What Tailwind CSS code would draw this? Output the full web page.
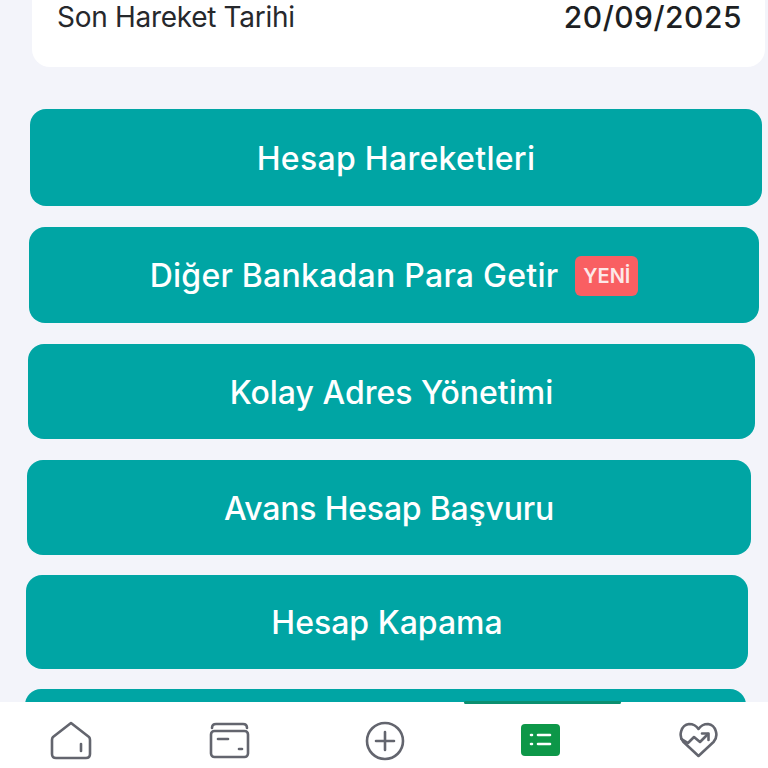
<!DOCTYPE html>
<html lang="tr">
<head>
<meta charset="UTF-8">
<script src="https://cdn.jsdelivr.net/npm/@tailwindcss/browser@4"></script>
<title>Hesap</title>
</head>
<body class="bg-[#f3f4fa] font-['Inter',sans-serif]">
<div class="relative h-[768px] w-[768px] overflow-hidden">

  <!-- Card -->
  <div class="ml-[32px] flex h-[67px] w-[733px] items-start justify-between rounded-b-[18px] bg-white pl-[25px] pr-[23px]">
    <span class="text-[28px] leading-[35px] tracking-[-0.3px] text-[#26282c]">Son Hareket Tarihi</span>
    <span class="text-[30px] leading-[35px] tracking-[0.5px] font-medium text-[#1d1f23]">20/09/2025</span>
  </div>

  <!-- Buttons -->
  <div class="mt-[42px] flex flex-col">
    <div class="ml-[30px] flex h-[97px] w-[732px] items-center justify-center rounded-[16px] bg-[#00a5a4] pt-[2px] text-[32px] font-medium tracking-[0.3px] text-white">Hesap Hareketleri</div>
    <div class="mt-[21px] ml-[29px] flex h-[96px] w-[730px] items-center justify-center gap-[17px] rounded-[16px] bg-[#00a5a4] pt-[2px] text-[32px] font-medium tracking-[0.25px] text-white">
      <span>Diğer Bankadan Para Getir</span>
      <span class="flex h-[40px] w-[63px] items-center justify-center rounded-[6px] bg-[#f95f62] text-[20px] font-semibold tracking-normal text-[#fde8e8]">YENİ</span>
    </div>
    <div class="mt-[21px] ml-[28px] flex h-[95px] w-[727px] items-center justify-center rounded-[16px] bg-[#00a5a4] pt-[2px] text-[32px] font-medium text-white">Kolay Adres Yönetimi</div>
    <div class="mt-[21px] ml-[27px] flex h-[95px] w-[724px] items-center justify-center rounded-[16px] bg-[#00a5a4] pt-[2px] text-[32px] font-medium tracking-[-0.2px] text-white">Avans Hesap Başvuru</div>
    <div class="mt-[20px] ml-[26px] flex h-[94px] w-[722px] items-center justify-center rounded-[16px] bg-[#00a5a4] pt-[2px] text-[32px] font-medium text-white">Hesap Kapama</div>
    <div class="mt-[20px] ml-[25px] h-[94px] w-[721px] rounded-[16px] bg-[#00a5a4]"></div>
  </div>

  <!-- Bottom nav -->
  <nav class="absolute bottom-0 left-0 h-[66px] w-full bg-white">
    <div class="absolute -top-[1px] left-[464px] h-[3px] w-[157px] rounded-[2px] bg-[#0c8f70]"></div>
    <svg class="absolute left-[50px] top-[19px]" width="42" height="40" viewBox="0 0 42 40" fill="none" stroke="#63656e" stroke-width="2.6" stroke-linejoin="round" stroke-linecap="round">
      <path d="M21 2 L39 16 Q40 17 40 19 V33 Q40 37 36 37 H6 Q2 37 2 33 V19 Q2 17 3 16 Z"/>
      <path d="M31 23 V30"/>
    </svg>
    <svg class="absolute left-[209px] top-[20px]" width="41" height="37" viewBox="0 0 41 37" fill="none" stroke="#63656e" stroke-width="2.6" stroke-linecap="round" stroke-linejoin="round">
      <path d="M3 6 Q3 2 7 2 H34 Q38 2 38 6"/>
      <rect x="2" y="9" width="37" height="26" rx="3.5"/>
      <path d="M9 17 H19"/>
      <path d="M30 27 H33"/>
    </svg>
    <svg class="absolute left-[365px] top-[19px]" width="40" height="40" viewBox="0 0 40 40" fill="none" stroke="#63656e" stroke-width="2.6" stroke-linecap="round">
      <circle cx="20" cy="20" r="18"/>
      <path d="M20 11 V29 M11 20 H29"/>
    </svg>
    <svg class="absolute left-[521px] top-[22px]" width="40" height="33" viewBox="0 0 40 33">
      <rect width="39" height="32" rx="4" fill="#0d9748"/>
      <g stroke="#ffffff" stroke-width="2.6" stroke-linecap="round">
        <path d="M10 11 H11 M10 20 H11"/>
        <path d="M17 11 H29 M17 20 H29"/>
      </g>
    </svg>
    <svg class="absolute left-[679px] top-[20px]" width="39" height="36" viewBox="0 0 39 36" fill="none" stroke="#63656e" stroke-width="2.6" stroke-linecap="round" stroke-linejoin="round">
      <path d="M19.5 34 L4.5 20 C-1 14 2 3 10 2 C14 2 17.5 4 19.5 7 C21.5 4 25 2 29 2 C37 3 40 14 34.500 20 Z"/>
      <path d="M2.500 17 L9 21 L15 15 L21 20 L29 12"/>
      <path d="M23 11.500 H29.500 V18"/>
    </svg>
  </nav>
</div>
</body>
</html>
